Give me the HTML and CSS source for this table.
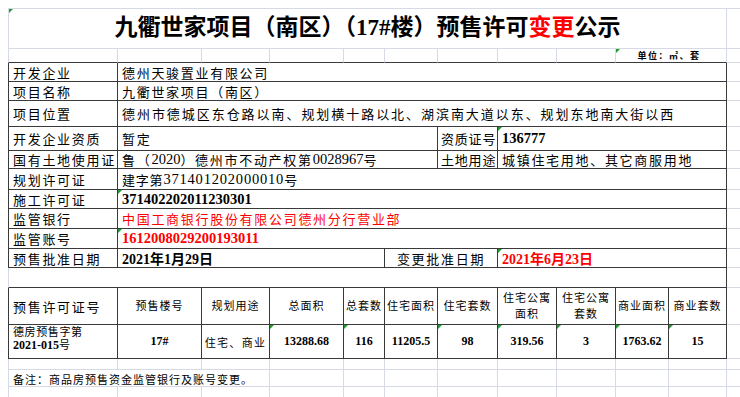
FILE: index.html
```html
<!DOCTYPE html>
<html lang="zh-CN">
<head>
<meta charset="utf-8">
<title>九衢世家项目（南区）（17#楼）预售许可变更公示</title>
<link rel="stylesheet" href="styles.css">
</head>
<body>
<div class="sheet">
  <div class="c title g"><span>九衢世家项目（南区）（17#楼）预售许可<span class="red">变更</span>公示</span></div>
  <div class="c m mt"></div>

  <div class="c u fl"></div><div class="c u"></div><div class="c u"></div><div class="c u"></div><div class="c u"></div><div class="c u"></div><div class="c u"></div><div class="c u"></div><div class="c u"></div>
  <div class="c u s2 unit g">单位：㎡、套</div>
  <div class="c m"></div>

  <div class="c d dl lab">开发企业</div><div class="c d s10 val">德州天骏置业有限公司</div><div class="c m"></div>
  <div class="c d dl lab">项目名称</div><div class="c d s10 val">九衢世家项目（南区）</div><div class="c m"></div>
  <div class="c d dl lab">项目位置</div><div class="c d s10 val loc">德州市德城区东仓路以南、规划横十路以北、湖滨南大道以东、规划东地南大街以西</div><div class="c m"></div>
  <div class="c d dl lab">开发企业资质</div><div class="c d s5 val">暂定</div><div class="c d lab tight">资质证号</div><div class="c d s4 val num g">136777</div><div class="c m"></div>
  <div class="c d dl lab">国有土地使用证</div><div class="c d s5 val">鲁（<span class="n">2020</span>）德州市不动产权第<span class="n">0028967</span>号</div><div class="c d lab tight">土地用途</div><div class="c d s4 val">城镇住宅用地、其它商服用地</div><div class="c m"></div>
  <div class="c d dl lab">规划许可证</div><div class="c d s10 val plan">建字第<span class="n">371401202000010</span>号</div><div class="c m"></div>
  <div class="c d dl lab">施工许可证</div><div class="c d s10 val num g">371402202011230301</div><div class="c m"></div>
  <div class="c d dl lab">监管银行</div><div class="c d s10 val red">中国工商银行股份有限公司德州分行营业部</div><div class="c m"></div>
  <div class="c d dl lab">监管账号</div><div class="c d s10 val num red g">1612008029200193011</div><div class="c m"></div>
  <div class="c d dl lab">预售批准日期</div><div class="c d s4 val num date">2021年1月29日</div><div class="c d s2 lab ctr">变更批准日期</div><div class="c d s4 val num date red g">2021年6月23日</div><div class="c m"></div>

  <div class="c s11 emp fl"></div><div class="c m"></div>

  <div class="c d dl lab">预售许可证号</div>
  <div class="c d h">预售楼号</div>
  <div class="c d h">规划用途</div>
  <div class="c d h">总面积</div>
  <div class="c d h">总套数</div>
  <div class="c d h">住宅面积</div>
  <div class="c d h">住宅套数</div>
  <div class="c d h"><span>住宅公寓<br>面积</span></div>
  <div class="c d h"><span>住宅公寓<br>套数</span></div>
  <div class="c d h">商业面积</div>
  <div class="c d h">商业套数</div>
  <div class="c m"></div>

  <div class="c d dl first"><span>德房预售字第<br><b class="b">2021-015</b>号</span></div>
  <div class="c d dv">17#</div>
  <div class="c d use">住宅、商业</div>
  <div class="c d dv g">13288.68</div>
  <div class="c d dv g">116</div>
  <div class="c d dv">11205.5</div>
  <div class="c d dv g">98</div>
  <div class="c d dv g">319.56</div>
  <div class="c d dv g">3</div>
  <div class="c d dv g">1763.62</div>
  <div class="c d dv g">15</div>
  <div class="c m"></div>

  <div class="c fl"></div><div class="c"></div><div class="c"></div><div class="c"></div><div class="c"></div><div class="c"></div><div class="c"></div><div class="c"></div><div class="c"></div><div class="c"></div><div class="c"></div><div class="c m"></div>

  <div class="c fl s3 note">备注：商品房预售资金监管银行及账号变更。</div><div class="c"></div><div class="c"></div><div class="c"></div><div class="c"></div><div class="c"></div><div class="c"></div><div class="c"></div><div class="c"></div><div class="c m"></div>

  <div class="c fl"></div><div class="c"></div><div class="c"></div><div class="c"></div><div class="c"></div><div class="c"></div><div class="c"></div><div class="c"></div><div class="c"></div><div class="c"></div><div class="c"></div><div class="c m"></div>
</div>
</body>
</html>
```

FILE: styles.css
```css
:root {
  --g: #d6dae7;
  --k: #3a3a3a;
}
html, body {
  margin: 0;
  background: #fff;
  overflow: hidden;
}
body {
  font-family: "Liberation Serif", "Noto Sans CJK SC", serif;
  color: #000;
}
.sheet {
  display: grid;
  grid-template-columns: 110px 84px 68px 74px 41px 53px 60px 59px 59px 53px 58px 13px;
  grid-template-rows: 41px 14px 19px 19px 26px 24px 18px 21px 19px 20px 20px 19px 20px 37px 34px 11px 17px 20px;
  padding: 8px 0 0 8px;
  width: 740px;
  height: 397px;
  box-sizing: border-box;
}
.c {
  box-sizing: border-box;
  border-right: 1px solid var(--g);
  border-bottom: 1px solid var(--g);
  display: flex;
  align-items: center;
  white-space: nowrap;
  overflow: hidden;
  position: relative;
  min-width: 0;
}
.d { border-right-color: var(--k); border-bottom-color: var(--k); }
.dl { border-left: 1px solid var(--k); }
.fl { border-left: 1px solid var(--g); }
.u { border-bottom-color: var(--k); }
.m { border-right: none; }
.mt { border-top: 1px solid var(--g); }
.s2 { grid-column: span 2; }
.s3 { grid-column: span 3; }
.s4 { grid-column: span 4; }
.s5 { grid-column: span 5; }
.s10 { grid-column: span 10; }
.s11 { grid-column: span 11; }

.g::before {
  content: "";
  position: absolute;
  top: 0;
  left: 0;
  border-top: 4px solid #1f9a2f;
  border-right: 4px solid transparent;
}

.title {
  grid-column: span 11;
  border-top: 1px solid var(--g);
  border-left: 1px solid var(--g);
  justify-content: center;
  font-weight: 700;
  font-size: 23px;
  padding-bottom: 7px;
}
.red { color: #ff0000; }
.unit {
  justify-content: center;
  font-size: 9px;
  font-weight: 700;
  letter-spacing: 1.5px;
  padding-right: 4px;
}

.lab, .val {
  padding-left: 4px;
  font-size: 13px;
  letter-spacing: 1.7px;
}
.tight {
  padding-left: 3px;
  letter-spacing: 0.8px;
}
.ctr { justify-content: center; padding-left: 0; }
.loc { letter-spacing: 1.95px; }
.plan { letter-spacing: 0.8px; }
.n { font-size: 14.5px; letter-spacing: 0; }
.plan .n { letter-spacing: 0.8px; }
.num {
  font-size: 14.5px;
  font-weight: 700;
  letter-spacing: 0;
}
.date { font-size: 14px; }
.emp { border-right-color: var(--k); border-bottom-color: var(--k); }

.h {
  justify-content: center;
  text-align: center;
  font-size: 11px;
  letter-spacing: 1px;
  line-height: 16px;
}
.first {
  align-items: flex-start;
  padding: 1px 0 0 4px;
  font-size: 11px;
  letter-spacing: 0.6px;
  line-height: 13px;
}
.b { font-size: 12px; letter-spacing: 0; }
.dv {
  justify-content: center;
  font-size: 12px;
  font-weight: 700;
}
.use {
  justify-content: center;
  font-size: 11px;
  letter-spacing: 1.3px;
}
.note {
  padding-left: 4px;
  font-size: 11px;
  letter-spacing: 1px;
  padding-top: 2px;
}
```
